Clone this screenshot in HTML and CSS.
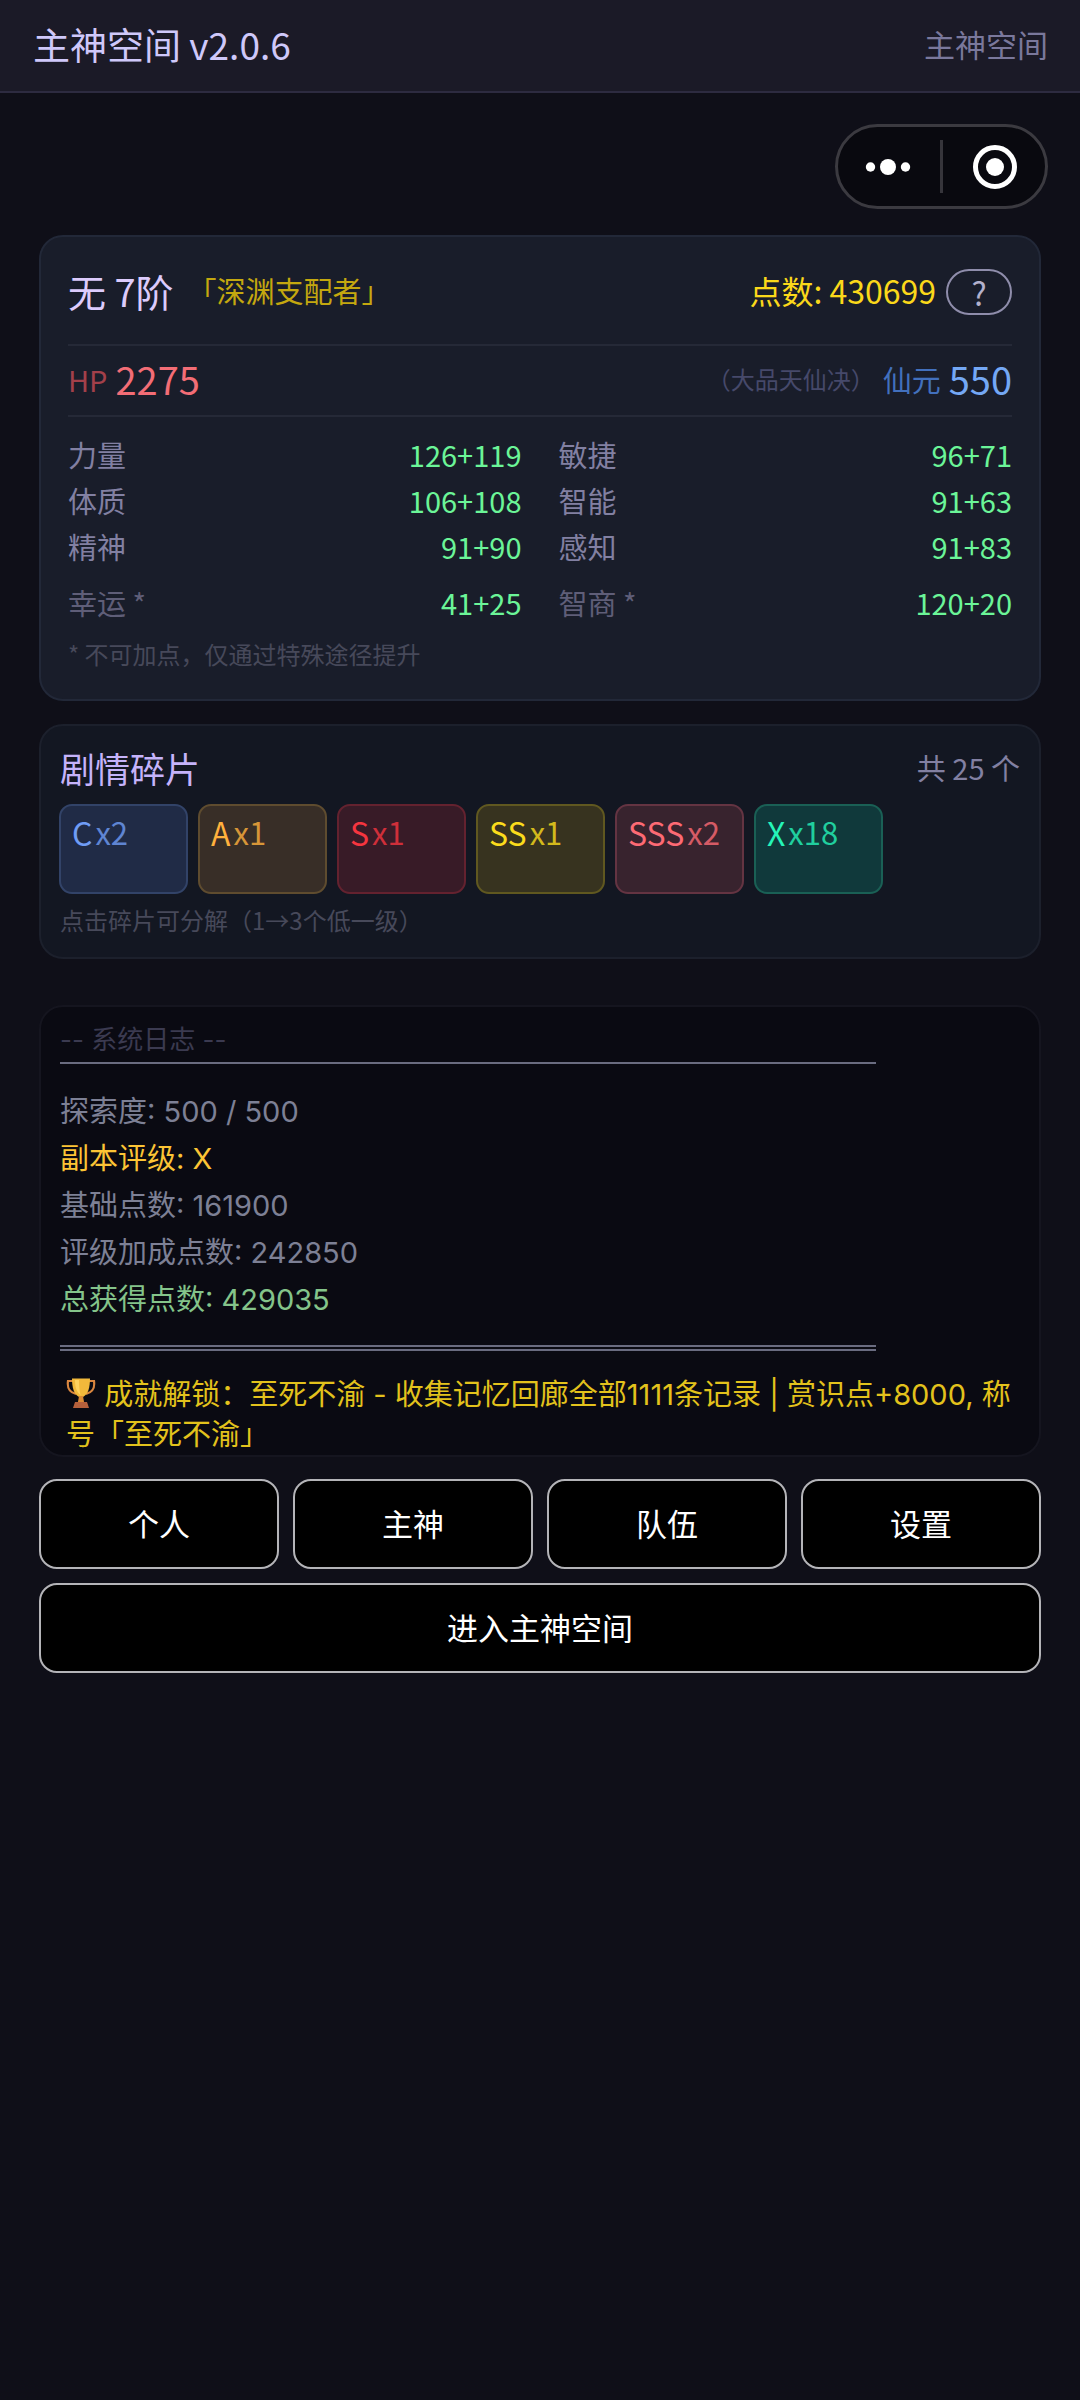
FILE: index.html
```html
<!DOCTYPE html>
<html lang="zh-CN">
<head>
<meta charset="utf-8">
<meta name="viewport" content="width=device-width, initial-scale=1">
<title>主神空间</title>
<link rel="stylesheet" href="styles.css">
</head>
<body>
<header class="topbar">
  <h1 class="topbar-title">主神空间 v2.0.6</h1>
  <span class="topbar-place">主神空间</span>
</header>

<div class="capsule-row">
  <div class="capsule">
    <button class="capsule-btn" type="button" aria-label="更多">
      <svg width="46" height="46" viewBox="0 0 46 46" fill="#fff"><circle cx="5.5" cy="23" r="4.7"/><circle cx="23" cy="23" r="8"/><circle cx="40.500" cy="23" r="4.7"/></svg>
    </button>
    <button class="capsule-btn" type="button" aria-label="关闭">
      <svg width="46" height="46" viewBox="0 0 46 46"><circle cx="23" cy="23" r="19.5" fill="none" stroke="#fff" stroke-width="5"/><circle cx="23" cy="23" r="9" fill="#fff"/></svg>
    </button>
  </div>
</div>

<main class="content">
  <section class="card player">
    <div class="player-head">
      <h2 class="player-name">无 7阶</h2>
      <span class="player-title">「深渊支配者」</span>
      <span class="points">点数: 430699</span>
      <button class="help" type="button" aria-label="帮助">?</button>
    </div>
    <div class="vitals">
      <span class="hp-label">HP</span>
      <span class="hp-value">2275</span>
      <span class="skill">（大品天仙决）</span>
      <span class="mp-label">仙元</span>
      <span class="mp-value">550</span>
    </div>
    <dl class="stats">
      <div class="stat"><dt>力量</dt><dd>126+119</dd></div>
      <div class="stat"><dt>敏捷</dt><dd>96+71</dd></div>
      <div class="stat"><dt>体质</dt><dd>106+108</dd></div>
      <div class="stat"><dt>智能</dt><dd>91+63</dd></div>
      <div class="stat"><dt>精神</dt><dd>91+90</dd></div>
      <div class="stat"><dt>感知</dt><dd>91+83</dd></div>
    </dl>
    <dl class="stats stats-fixed">
      <div class="stat"><dt>幸运 *</dt><dd>41+25</dd></div>
      <div class="stat"><dt>智商 *</dt><dd>120+20</dd></div>
    </dl>
    <p class="note">* 不可加点，仅通过特殊途径提升</p>
  </section>

  <section class="card shards">
    <div class="shards-head">
      <h2 class="shards-title">剧情碎片</h2>
      <span class="shards-total">共 25 个</span>
    </div>
    <div class="chips">
      <button class="chip chip-c" type="button">C<span class="count">x2</span></button>
      <button class="chip chip-a" type="button">A<span class="count">x1</span></button>
      <button class="chip chip-s" type="button">S<span class="count">x1</span></button>
      <button class="chip chip-ss" type="button">SS<span class="count">x1</span></button>
      <button class="chip chip-sss" type="button">SSS<span class="count">x2</span></button>
      <button class="chip chip-x" type="button">X<span class="count">x18</span></button>
    </div>
    <p class="note">点击碎片可分解（1→3个低一级）</p>
  </section>

  <section class="card log">
    <p class="log-title">-- 系统日志 --</p>
    <hr class="rule">
    <div class="log-lines">
      <p>探索度: 500 / 500</p>
      <p class="grade">副本评级: X</p>
      <p>基础点数: 161900</p>
      <p>评级加成点数: 242850</p>
      <p class="total">总获得点数: 429035</p>
    </div>
    <hr class="rule rule-double">
    <p class="achievement"><svg class="trophy" viewBox="0 0 30 30" width="30" height="30" aria-hidden="true"><path d="M7 3H2c-1 7 1 11 8 13M23 3h5c1 7-1 11-8 13" fill="none" stroke="#d9863f" stroke-width="2.200"/><path d="M6 .5h18c0 9-2 16-7 18.500h-4C8 16.500 6 9.500 6 .5z" fill="#f2b93b"/><path d="M9 2h4c0 6 .5 11 1.500 15C10.500 14 9 9 9 2z" fill="#ffd25e"/><path d="M13 18h4l1.200 7h-6.400z" fill="#d98a35"/><path d="M9 24h12l2 6H7z" fill="#b5603c"/></svg> 成就解锁：至死不渝 - 收集记忆回廊全部1111条记录 | 赏识点+8000, 称号「至死不渝」</p>
  </section>

  <nav class="actions">
    <button class="action" type="button">个人</button>
    <button class="action" type="button">主神</button>
    <button class="action" type="button">队伍</button>
    <button class="action" type="button">设置</button>
    <button class="action action-wide" type="button">进入主神空间</button>
  </nav>
</main>
</body>
</html>
```
FILE: styles.css
```css
* {
  box-sizing: border-box;
}

body {
  margin: 0;
  min-height: 100vh;
  background: #0f0f18;
  color: #8280a2;
  font-family: "Noto Sans CJK SC", "Noto Sans", sans-serif;
  font-size: 29px;
  font-weight: 400;
}

h1, h2, p, dl, dd {
  margin: 0;
  font-weight: 400;
}

button {
  margin: 0;
  padding: 0;
  font: inherit;
  color: inherit;
  cursor: pointer;
}

.topbar {
  display: flex;
  align-items: center;
  justify-content: space-between;
  height: 93px;
  padding: 0 32px 4px 33px;
  background: #1b1a27;
  border-bottom: 2px solid #2d2b40;
}

.topbar-title {
  font-size: 37px;
  color: #cfc8fa;
}

.topbar-place {
  font-size: 31px;
  color: #7a789c;
}

.capsule-row {
  display: flex;
  justify-content: flex-end;
  padding: 31px 32px 26px;
}

.capsule {
  display: flex;
  align-items: center;
  width: 213px;
  height: 85px;
  background: #09090f;
  border: 3px solid #3b3a40;
  border-radius: 43px;
}

.capsule-btn {
  flex: 1;
  display: flex;
  align-items: center;
  justify-content: center;
  height: 53px;
  padding-right: 2px;
  background: none;
  border: 0;
}

.capsule-btn + .capsule-btn {
  padding: 0 0 0 2px;
  border-left: 3px solid #36353b;
}

.content {
  padding: 0 39px;
}

.card {
  border: 2px solid #222838;
  border-radius: 24px;
}

.player {
  padding: 32px 27px 26px;
  background: #191d2a;
}

.player-head {
  display: flex;
  align-items: center;
  height: 75px;
  padding-bottom: 29px;
}

.player-name,
.player-title,
.points {
  padding-bottom: 4px;
}

.player-name {
  font-size: 38px;
  color: #dccbfc;
}

.player-title {
  margin-left: 14px;
  color: #c4a80f;
}

.points {
  margin-left: auto;
  font-size: 32px;
  color: #fbd81a;
}

.help {
  width: 66px;
  height: 46px;
  margin-left: 10px;
  background: none;
  border: 2px solid #8f8dab;
  border-radius: 23px;
  font-size: 32px;
  line-height: 40px;
  color: #b3b1cd;
}

.vitals {
  display: flex;
  align-items: center;
  height: 73px;
  padding-bottom: 4px;
  border-top: 2px solid #252937;
  border-bottom: 2px solid #252937;
}

.hp-label {
  color: #a3404a;
}

.hp-value {
  margin-left: 8px;
  font-size: 38px;
  color: #f36d76;
}

.skill {
  margin-left: auto;
  font-size: 24px;
  color: #46496a;
}

.mp-label {
  margin-left: 8px;
  color: #4270bd;
}

.mp-value {
  margin-left: 8px;
  font-size: 38px;
  color: #74a8f5;
}

.stats {
  display: grid;
  grid-template-columns: 1fr 1fr;
  column-gap: 37px;
  padding-top: 14px;
  line-height: 46px;
}

.stats-fixed {
  padding-top: 10px;
}

.stat {
  display: flex;
  justify-content: space-between;
}

.stat dd {
  color: #6bf598;
}

.stats-fixed dt {
  color: #5f5e78;
}

.note {
  margin-top: 12px;
  padding-bottom: 2px;
  font-size: 24px;
  line-height: 34px;
  color: #47495a;
}

.shards {
  margin-top: 23px;
  padding: 16px 19px 18px;
  background: #131722;
  border-color: #1c202c;
}

.shards-head {
  display: flex;
  align-items: center;
  justify-content: space-between;
  height: 54px;
  padding-bottom: 4px;
}

.shards-title {
  font-size: 35px;
  color: #c5b3fa;
}

.chips {
  display: flex;
  flex-wrap: wrap;
  gap: 10px;
  margin: 8px -1px 0;
}

.chip {
  display: flex;
  align-items: flex-start;
  gap: 3px;
  width: 129px;
  height: 90px;
  padding: 6px 11px;
  border: 2px solid;
  border-radius: 13px;
  font-size: 32px;
  line-height: 40px;
}

.count {
  font-size: 31px;
  opacity: 0.8;
}

.chip-c { color: #6f9cf5; background: #202b46; border-color: #324368; }
.chip-a { color: #ffb13d; background: #382e27; border-color: #5f4c2f; }
.chip-s { color: #f5353f; background: #381b27; border-color: #64222f; }
.chip-ss { color: #fbdc1c; background: #37331f; border-color: #605820; }
.chip-sss { color: #fd6a74; background: #38232e; border-color: #643442; }
.chip-x { color: #25f5b8; background: #10393b; border-color: #1a6055; }

.shards .note {
  margin-top: 9px;
}

.log {
  margin-top: 46px;
  padding: 15px 19px 0;
  background: #0a0a12;
  border-color: #15151f;
  font-family: Inter, "Noto Sans CJK SC", sans-serif;
}

.log-title {
  font-size: 26px;
  line-height: 36px;
  color: #3b3a50;
}

.rule {
  width: 85%;
  margin: 4px 0 0;
  border: 0;
  border-top: 2px solid #6a6c80;
}

.rule-double {
  margin-top: 22px;
  border-top: 6px double #6a6c80;
}

.log-lines {
  margin-top: 24px;
  line-height: 47px;
  color: #7d8095;
}

.grade {
  color: #fcc435;
}

.total {
  color: #84c48a;
}

.achievement {
  margin-top: 24px;
  padding: 0 0 0 6px;
  line-height: 40px;
  color: #e3c21c;
}

.trophy {
  vertical-align: -3px;
}

.actions {
  display: grid;
  grid-template-columns: repeat(4, 1fr);
  gap: 14px;
  margin-top: 22px;
}

.action {
  height: 90px;
  padding-bottom: 4px;
  background: #000;
  border: 2px solid #b4b4b8;
  border-radius: 18px;
  font-size: 31px;
  color: #fff;
}

.action-wide {
  grid-column: 1 / -1;
}
```
